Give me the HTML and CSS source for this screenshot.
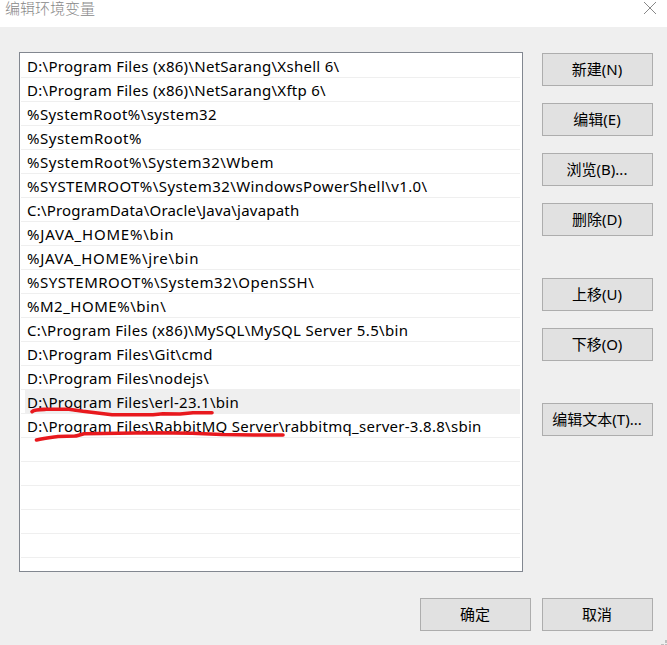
FILE: index.html
```
<!DOCTYPE html>
<html lang="zh-CN">
<head>
<meta charset="utf-8">
<title>编辑环境变量</title>
<link rel="stylesheet" href="styles.css">
</head>
<body>
<div class="dialog">
  <header class="titlebar">
    <span class="title">编辑环境变量</span>
    <svg class="close" width="14" height="14" viewBox="0 0 14 14"><path d="M1 1L13 13M13 1L1 13"/></svg>
  </header>
  <main class="content">
    <ul class="list">
      <li>D:\Program Files (x86)\NetSarang\Xshell 6\</li>
      <li>D:\Program Files (x86)\NetSarang\Xftp 6\</li>
      <li class="loose">%SystemRoot%\system32</li>
      <li class="looser">%SystemRoot%</li>
      <li class="looser">%SystemRoot%\System32\Wbem</li>
      <li class="loose">%SYSTEMROOT%\System32\WindowsPowerShell\v1.0\</li>
      <li class="tight">C:\ProgramData\Oracle\Java\javapath</li>
      <li class="widest">%JAVA_HOME%\bin</li>
      <li class="wide">%JAVA_HOME%\jre\bin</li>
      <li class="looser">%SYSTEMROOT%\System32\OpenSSH\</li>
      <li class="looser">%M2_HOME%\bin\</li>
      <li class="medium">C:\Program Files (x86)\MySQL\MySQL Server 5.5\bin</li>
      <li>D:\Program Files\Git\cmd</li>
      <li>D:\Program Files\nodejs\</li>
      <li class="selected">D:\Program Files\erl-23.1\bin</li>
      <li>D:\Program Files\RabbitMQ Server\rabbitmq_server-3.8.8\sbin</li>
      <li></li><li></li><li></li><li></li><li></li>
    </ul>
    <div class="actions">
      <button>新建(N)</button>
      <button>编辑(E)</button>
      <button>浏览(B)...</button>
      <button>删除(D)</button>
      <button class="group">上移(U)</button>
      <button>下移(O)</button>
      <button class="group">编辑文本(T)...</button>
    </div>
  </main>
  <footer class="footer">
    <button>确定</button>
    <button>取消</button>
  </footer>
  <svg class="marks" width="667" height="645" viewBox="0 0 667 645">
    <path d="M32 411.700C34 409.500 39 409.500 46 409.300H69L83 411.300L112 414.700H153L163 413.700L180 414L193 412.700H212"/>
    <path d="M36.500 440C44 438 50 437.500 58 436.500L76 436L84 433.700L153 432.700L192 433.300L222 434.500L254 435H283"/>
  </svg>
  <svg class="grip" width="6" height="5" viewBox="0 0 6 5"><path d="M4 0h2v3h-2zM0 4h3v1h-3zM4 4h2v1h-2z"/></svg>
</div>
</body>
</html>
```
FILE: styles.css
```
* { box-sizing: border-box; }
body { margin: 0; font-family: "Noto Sans", "Noto Sans CJK SC", sans-serif; font-size: 15px; color: #000; }
.dialog { position: relative; width: 667px; height: 645px; background: #efefef; overflow: hidden; }
.titlebar { display: flex; justify-content: space-between; height: 27px; padding: 0 10px 0 5px; background: #fff; }
.title { font-family: "Noto Sans CJK SC", sans-serif; font-weight: 300; line-height: 16px; color: #888; }
.close { margin-top: 1px; fill: none; stroke: #888; stroke-width: 1; }
.content { display: flex; justify-content: space-between; padding: 25px 14px 0 19px; }
.list { width: 504px; height: 520px; margin: 0; padding: 1px 2px 0 1px; list-style: none; background: #fff; border: 1px solid #828790; }
.list li { height: 24px; padding-left: 6px; border-bottom: 1px solid #efefef; line-height: 25px; letter-spacing: 0.28px; white-space: pre; }
.list .tight { letter-spacing: 0.2px; }
.list .medium { letter-spacing: 0.33px; }
.list .loose { letter-spacing: 0.41px; }
.list .looser { letter-spacing: 0.51px; }
.list .wide { letter-spacing: 0.68px; }
.list .widest { letter-spacing: 0.8px; }
.list .selected { background: linear-gradient(#efefef, #efefef) 4px 0 no-repeat; }
.actions { display: flex; flex-direction: column; gap: 17px; padding-top: 1px; }
button { width: 111px; height: 33px; padding: 0 1px 0 0; border: 1px solid #adadad; border-radius: 0; background: #e1e1e1; font-family: "Noto Sans", "Noto Sans CJK SC", sans-serif; font-size: 15px; line-height: 31px; color: #000; white-space: nowrap; }
.group { margin-top: 25px; }
.footer { display: flex; justify-content: flex-end; gap: 11px; padding: 26px 14px 0 0; }
.marks { position: absolute; left: 0; top: 0; fill: none; stroke: #e8191e; stroke-width: 3.6; stroke-linecap: round; stroke-linejoin: round; }
.grip { position: absolute; right: 0; bottom: 0; fill: #bfbfbf; }
```
